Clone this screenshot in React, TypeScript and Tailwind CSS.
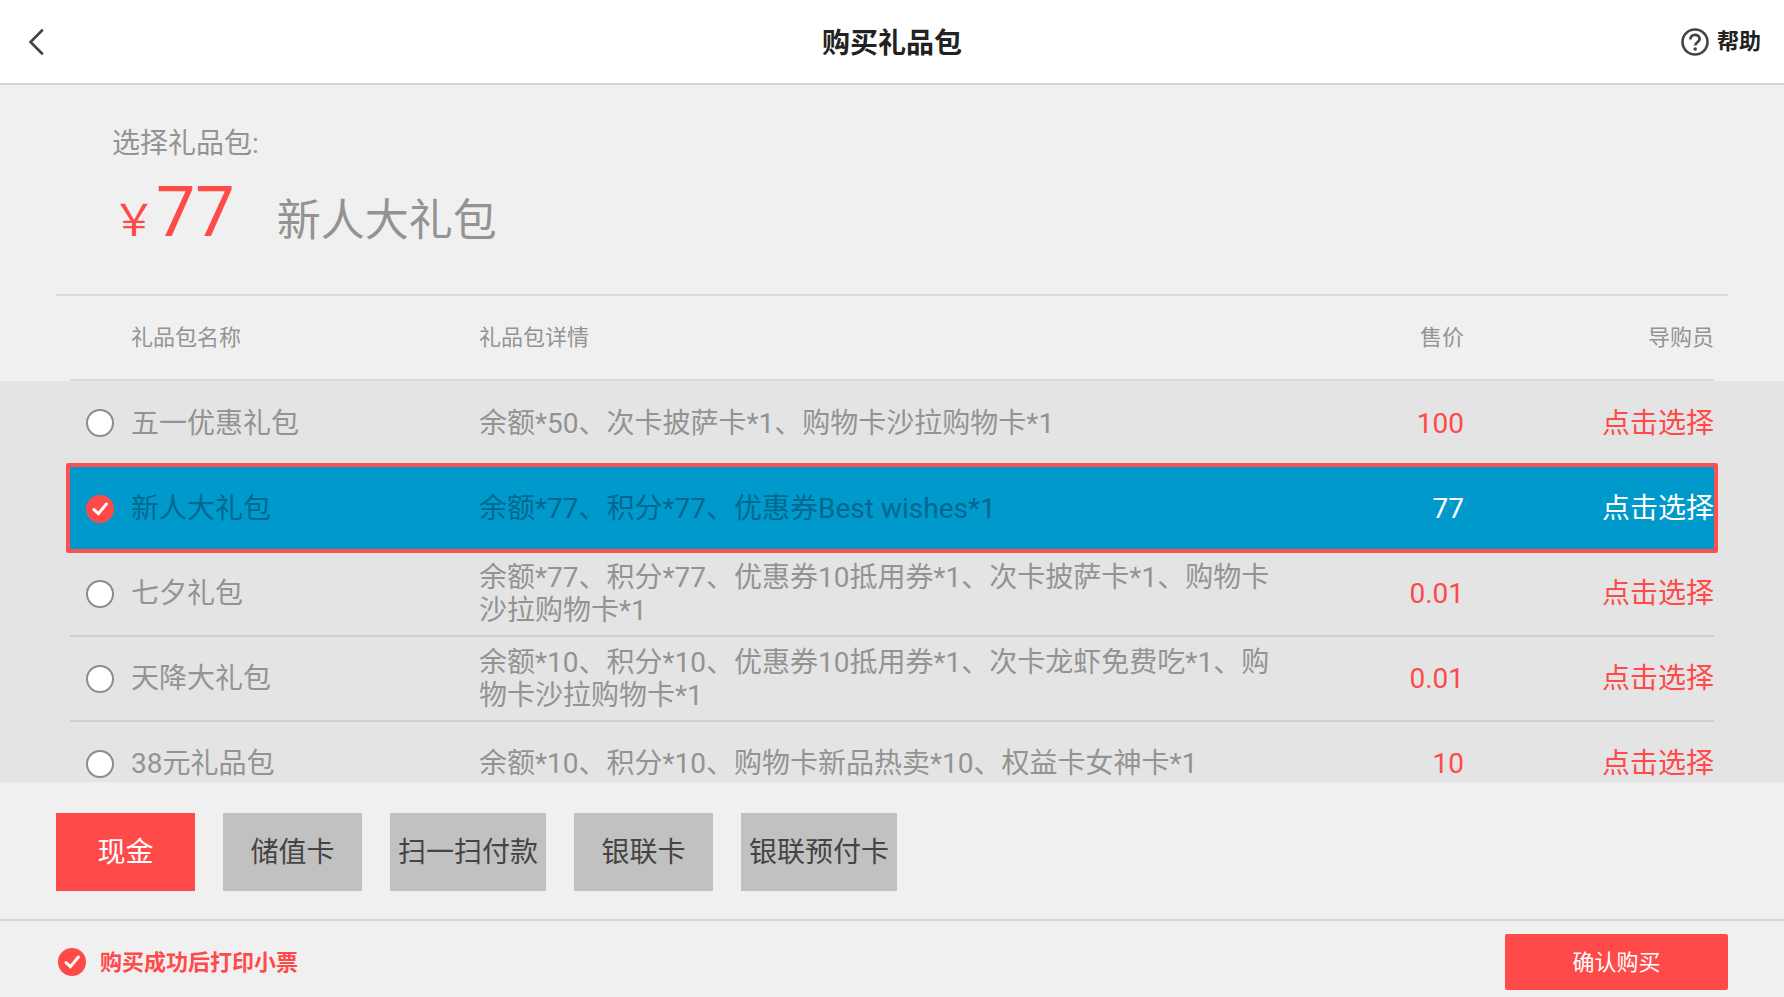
import { useState } from 'react';
import clsx from 'clsx';

interface GiftPack {
   id: number;
   name: string;
   detail: string;
   price: string;
}

const packs: GiftPack[] = [
   { id: 1, name: '五一优惠礼包', detail: '余额*50、次卡披萨卡*1、购物卡沙拉购物卡*1', price: '100' },
   { id: 2, name: '新人大礼包', detail: '余额*77、积分*77、优惠券Best wishes*1', price: '77' },
   { id: 3, name: '七夕礼包', detail: '余额*77、积分*77、优惠券10抵用券*1、次卡披萨卡*1、购物卡沙拉购物卡*1', price: '0.01' },
   { id: 4, name: '天降大礼包', detail: '余额*10、积分*10、优惠券10抵用券*1、次卡龙虾免费吃*1、购物卡沙拉购物卡*1', price: '0.01' },
   { id: 5, name: '38元礼品包', detail: '余额*10、积分*10、购物卡新品热卖*10、权益卡女神卡*1', price: '10' },
];

const payments = ['现金', '储值卡', '扫一扫付款', '银联卡', '银联预付卡'];

function CheckMark() {
   return (
      <svg viewBox="0 0 28 28" className="pointer-events-none col-start-1 row-start-1 size-7" fill="none" aria-hidden="true">
         <path d="M8 14.6 12.4 18.6 20.4 9" stroke="#fff" strokeWidth="3" strokeLinecap="round" />
      </svg>
   );
}

function Columns() {
   return (
      <colgroup>
         <col className="w-[409px]" />
         <col />
         <col className="w-[184px]" />
         <col className="w-[250px]" />
      </colgroup>
   );
}

const circleInput =
   'col-start-1 row-start-1 size-7 appearance-none rounded-full border-2 border-[#8c8c8c] bg-white checked:border-[#ff4a4a] checked:bg-[#ff4a4a]';

export default function App() {
   const [selectedId, setSelectedId] = useState(2);
   const [payment, setPayment] = useState('现金');
   const [printReceipt, setPrintReceipt] = useState(true);

   const selected = packs.find((pack) => pack.id === selectedId) ?? packs[0];

   return (
      <div className="flex h-screen flex-col bg-[#f0f0f0] font-[Roboto,'Noto_Sans_CJK_SC',sans-serif] text-[28px] leading-[33px] text-[#939393]">
         <header className="grid shrink-0 grid-cols-[1fr_auto_1fr] items-center border-b-2 border-[#d4d4d4] bg-white px-[23px] py-[25px] text-[#222]">
            <button type="button" aria-label="返回" className="justify-self-start pl-[5px]">
               <svg viewBox="0 0 16 26" className="h-[26px] w-4" fill="none" aria-hidden="true">
                  <path d="M14 1.5 2.5 13 14 24.5" stroke="#444" strokeWidth="2.6" strokeLinecap="round" />
               </svg>
            </button>
            <h1 className="font-['Noto_Sans_CJK_SC',sans-serif] font-bold">购买礼品包</h1>
            <button type="button" className="flex items-center gap-2 justify-self-end text-[22px] font-bold">
               <svg viewBox="0 0 28 28" className="size-7" fill="none" aria-hidden="true">
                  <circle cx="14" cy="14" r="12.5" stroke="#444" strokeWidth="2.6" />
                  <path
                     d="M9.4 11.4c0-2.7 2-4.5 4.6-4.5s4.6 1.7 4.6 4.1c0 3.2-4.4 3.3-4.4 6.6"
                     stroke="#444"
                     strokeWidth="2.8"
                  />
                  <circle cx="14.2" cy="21" r="1.8" fill="#444" />
               </svg>
               帮助
            </button>
         </header>

         <section className="mx-14 shrink-0 border-b-2 border-[#dadada] px-14 pt-[42px] pb-[41px]">
            <p>选择礼品包:</p>
            <div className="mt-[11px] flex items-baseline text-[70px] leading-[82px]">
               <span className="text-[44px] leading-[44px] text-[#ff4a4a]">￥</span>
               <span className="text-[#ff4a4a]">{selected.price}</span>
               <span className="ml-[42px] text-[44px] leading-[44px]">{selected.name}</span>
            </div>
         </section>

         <div className="shrink-0 px-[70px]">
            <table className="w-full table-fixed text-[22px]" aria-label="礼品包表头">
               <Columns />
               <thead>
                  <tr className="h-[84px] border-b-2 border-[#dadada]">
                     <th className="pl-[61px] text-left font-normal">礼品包名称</th>
                     <th className="text-left font-normal">礼品包详情</th>
                     <th className="text-right font-normal">售价</th>
                     <th className="text-right font-normal">导购员</th>
                  </tr>
               </thead>
            </table>
         </div>

         <div className="min-h-0 flex-1 overflow-y-auto bg-[#e4e4e4] px-[70px] [scrollbar-width:none]">
            <table className="w-full table-fixed" aria-label="礼品包列表">
               <Columns />
               <tbody>
                  {packs.map((pack) => {
                     const active = pack.id === selectedId;
                     return (
                        <tr
                           key={pack.id}
                           className={clsx(
                              'relative h-[85px] border-b-2 border-[#cfcfcf]',
                              active && 'bg-[#0099cc] text-[#00688e]'
                           )}
                        >
                           <td className="pl-4">
                              <label className="flex items-center gap-[17px]">
                                 <span className="grid">
                                    <input
                                       type="radio"
                                       name="pack"
                                       checked={active}
                                       onChange={() => setSelectedId(pack.id)}
                                       className={circleInput}
                                    />
                                    {active && <CheckMark />}
                                 </span>
                                 {pack.name}
                              </label>
                              {active && (
                                 <span className="pointer-events-none absolute -inset-x-1 -top-[3px] -bottom-1 z-10 rounded-xs border-4 border-[#ff5050]" />
                              )}
                           </td>
                           <td>{pack.detail}</td>
                           <td className={clsx('text-right', active ? 'text-white' : 'text-[#ff4a4a]')}>{pack.price}</td>
                           <td className="text-right">
                              <button type="button" className={active ? 'text-white' : 'text-[#ff4a4a]'}>
                                 点击选择
                              </button>
                           </td>
                        </tr>
                     );
                  })}
               </tbody>
            </table>
         </div>

         <div className="flex shrink-0 gap-7 px-14 pt-[31px] pb-7">
            {payments.map((item) => (
               <button
                  key={item}
                  type="button"
                  aria-pressed={item === payment}
                  onClick={() => setPayment(item)}
                  className={clsx(
                     'h-[78px] min-w-[139px] px-2',
                     item === payment ? 'bg-[#ff4a4a] text-white' : 'bg-[#c1c1c1] text-[#444]'
                  )}
               >
                  {item}
               </button>
            ))}
         </div>

         <footer className="flex shrink-0 items-center justify-between border-t-2 border-[#d6d6d6] px-14 pt-[13px] pb-[7px] text-[22px]">
            <label className="flex items-center gap-3.5 pl-0.5 font-bold text-[#ff4a4a]">
               <span className="grid">
                  <input
                     type="checkbox"
                     checked={printReceipt}
                     onChange={(e) => setPrintReceipt(e.target.checked)}
                     className={circleInput}
                  />
                  {printReceipt && <CheckMark />}
               </span>
               购买成功后打印小票
            </label>
            <button type="button" className="h-14 w-[223px] rounded-xs bg-[#ff4a4a] text-white">
               确认购买
            </button>
         </footer>
      </div>
   );
}
